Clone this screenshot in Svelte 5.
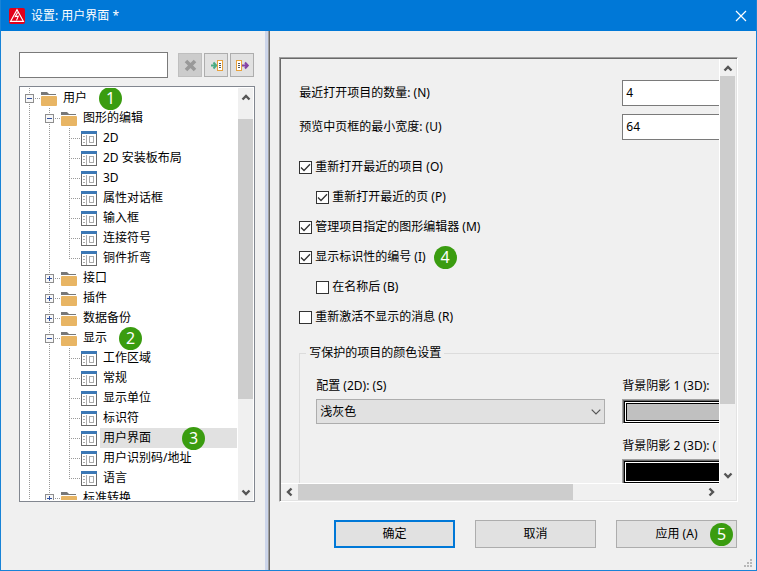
<script>
  const leaf = (label, extra = {}) => ({ level: 2, label, ...extra });

  const rows = [
    { level: 0, label: '用户', open: true, badge: 1 },
    { level: 1, label: '图形的编辑', open: true },
    leaf('2D'),
    leaf('2D 安装板布局'),
    leaf('3D'),
    leaf('属性对话框'),
    leaf('输入框'),
    leaf('连接符号'),
    leaf('铜件折弯', { last: true }),
    { level: 1, label: '接口', open: false },
    { level: 1, label: '插件', open: false },
    { level: 1, label: '数据备份', open: false },
    { level: 1, label: '显示', open: true, badge: 2 },
    leaf('工作区域'),
    leaf('常规'),
    leaf('显示单位'),
    leaf('标识符'),
    leaf('用户界面', { selected: true, badge: 3 }),
    leaf('用户识别码/地址'),
    leaf('语言', { last: true }),
    { level: 1, label: '标准转换', open: false }
  ];

  const options = [
    { label: '重新打开最近的项目 (O)', checked: true },
    { label: '重新打开最近的页 (P)', checked: true, indent: true },
    { label: '管理项目指定的图形编辑器 (M)', checked: true },
    { label: '显示标识性的编号 (I)', checked: true, badge: 4 },
    { label: '在名称后 (B)', checked: false, indent: true },
    { label: '重新激活不显示的消息 (R)', checked: false }
  ];

  const arrows = {
    up: 'M4.5 10.5L8 7L11.5 10.5',
    down: 'M4.5 6.5L8 10L11.5 6.5',
    left: 'M9.5 4.5L6 8L9.5 11.5',
    right: 'M6.5 4.5L10 8L6.5 11.5'
  };
</script>

{#snippet arrow(dir, name)}
  <button class="arrow" aria-label={name}>
    <svg width="16" height="16" viewBox="0 0 16 16"><path d={arrows[dir]} fill="none" stroke="#555" stroke-width="2.4" /></svg>
  </button>
{/snippet}

{#snippet folder()}
  <svg class="icon" width="16" height="16" viewBox="0 0 16 16">
    <path d="M0 2H6L8 4H15V5H0Z" fill="#787878" />
    <path d="M1 6H15Q16 6 16 7V15Q16 16 15 16H1Q0 16 0 15V7Q0 6 1 6Z" fill="#e8b564" />
  </svg>
{/snippet}

{#snippet page()}
  <svg class="icon" width="16" height="16" viewBox="0 0 16 16" shape-rendering="crispEdges">
    <rect x="0.5" y="1.5" width="15" height="14" fill="#fff" stroke="#6a6a6a" />
    <rect x="0" y="1" width="16" height="3" fill="#3c78b5" />
    <path d="M5.5 5V15M2 6.5H4M2 9.5H4M2 12.5H4" stroke="#aaa" fill="none" />
    <rect x="8.5" y="6.5" width="4" height="6" fill="#fff" stroke="#aaa" />
  </svg>
{/snippet}

<div class="window">
  <header>
    <svg width="16" height="16" viewBox="0 0 16 16">
      <rect width="16" height="16" rx="2" fill="#e2001a" />
      <path d="M8 1.8L14.4 13.3H1.6Z" fill="none" stroke="#fff" stroke-width="1.2" />
      <path d="M8.6 4.5L6.3 8.6L9.3 8.1L7.5 12.4" fill="none" stroke="#fff" stroke-width="1.1" />
    </svg>
    <h1>设置: 用户界面 *</h1>
    <button class="close" aria-label="关闭">
      <svg width="12" height="12" viewBox="0 0 12 12"><path d="M1 1L11 11M11 1L1 11" stroke="#fff" stroke-width="1.2" /></svg>
    </button>
  </header>

  <main>
    <aside>
      <div class="tools">
        <input class="search" type="text" aria-label="搜索" />
        <div class="toolbtns">
          <button class="tool" disabled aria-label="清除">
            <svg width="22" height="22" viewBox="0 0 22 22"><path d="M7 7L16 16M16 7L7 16" stroke="#999" stroke-width="3.6" /></svg>
          </button>
          <button class="tool" aria-label="导入">
            <svg width="22" height="22" viewBox="0 0 22 22">
              <path d="M6 11.5H11M8.5 8.5L11.2 11.5L8.5 14.5" fill="none" stroke="#4bab84" stroke-width="2" />
              <rect x="12.5" y="6.5" width="5" height="10" fill="#fff" stroke="#e8a23c" />
              <path d="M14 9.5H16M14 11.5H16M14 13.5H16" stroke="#555" />
            </svg>
          </button>
          <button class="tool" aria-label="导出">
            <svg width="22" height="22" viewBox="0 0 22 22">
              <rect x="5.5" y="6.5" width="5" height="10" fill="#fff" stroke="#e8a23c" />
              <path d="M7 9.5H9M7 11.5H9M7 13.5H9" stroke="#555" />
              <path d="M11 11.5H16.5M14 8.5L16.8 11.5L14 14.5" fill="none" stroke="#8443a5" stroke-width="2" />
            </svg>
          </button>
        </div>
      </div>

      <div class="treebox">
        <ul class="tree" role="tree">
          {#each rows as row}
            <li role="treeitem" aria-selected={!!row.selected}>
              {#each Array(row.level + 1) as _, i}
                <svg class="guide" width="20" height="20" viewBox="0 0 20 20" shape-rendering="crispEdges">
                  <path d={i === 2 && row.last ? 'M9.5 0V11' : 'M9.5 0V20'} stroke="#999" stroke-dasharray="1 1" />
                  {#if i === row.level}
                    <path d="M11 10.5H20" stroke="#999" stroke-dasharray="1 1" />
                    {#if row.level < 2}
                      <rect x="5.5" y="6.5" width="8" height="8" fill="#f7f7f7" stroke="#8e8e8e" />
                      <path d={row.open ? 'M7 10.5H12' : 'M7 10.5H12M9.5 8V13'} stroke="#3050a0" />
                    {/if}
                  {/if}
                </svg>
              {/each}
              {#if row.level < 2}{@render folder()}{:else}{@render page()}{/if}
              <span class="label" class:selected={row.selected}>
                {row.label}
                {#if row.badge}<span class="badge" class:far={row.badge === 3}>{row.badge}</span>{/if}
              </span>
            </li>
          {/each}
        </ul>
        <div class="vbar">
          {@render arrow('up', '向上')}
          <div class="track"><div class="thumb treethumb"></div></div>
          {@render arrow('down', '向下')}
        </div>
      </div>
    </aside>

    <div class="splitter"></div>

    <section>
      <div class="panel">
        <div class="view">
          <form class="content">
            <div class="pair">
              <label for="recent">最近打开项目的数量: (N)</label>
              <input id="recent" type="text" value="4" />
              <label for="preview">预览中页框的最小宽度: (U)</label>
              <input id="preview" type="text" value="64" />
            </div>

            <div class="checks">
              {#each options as o}
                <div class="check" class:indent={o.indent}>
                  <label><input type="checkbox" checked={o.checked} />{o.label}</label>
                  {#if o.badge}<span class="badge near">{o.badge}</span>{/if}
                </div>
              {/each}
            </div>

            <fieldset>
              <legend>写保护的项目的颜色设置</legend>
              <div class="colors">
                <div class="field">
                  <label for="scheme">配置 (2D): (S)</label>
                  <div class="selectwrap">
                    <select id="scheme"><option>浅灰色</option></select>
                    <svg width="10" height="6" viewBox="0 0 10 6"><path d="M0.7 0.7L5 5L9.3 0.7" fill="none" stroke="#555" stroke-width="1.2" /></svg>
                  </div>
                </div>
                <div class="field">
                  <label for="shade1">背景阴影 1 (3D):</label>
                  <button id="shade1" type="button" class="swatch" aria-label="背景阴影 1"><span class="fill gray"></span></button>
                </div>
                <div class="field second">
                  <label for="shade2">背景阴影 2 (3D): (</label>
                  <button id="shade2" type="button" class="swatch" aria-label="背景阴影 2"><span class="fill black"></span></button>
                </div>
              </div>
            </fieldset>
          </form>
        </div>
        <div class="vbar edge">
          {@render arrow('up', '向上')}
          <div class="track"><div class="thumb viewthumb"></div></div>
          {@render arrow('down', '向下')}
        </div>
        <div class="hbar">
          {@render arrow('left', '向左')}
          <div class="track"><div class="thumb widethumb"></div></div>
          {@render arrow('right', '向右')}
        </div>
      </div>

      <footer>
        <button class="push default">确定</button>
        <button class="push">取消</button>
        <button class="push">应用 (A)<span class="badge corner">5</span></button>
      </footer>
    </section>
  </main>

  <svg class="grip" width="8" height="8" viewBox="0 0 8 8" fill="#b8b8b8" shape-rendering="crispEdges">
    <path d="M6 0h2v2h-2zM3 3h2v2h-2zM6 3h2v2h-2zM0 6h2v2h-2zM3 6h2v2h-2zM6 6h2v2h-2z" />
  </svg>
</div>

<style>
  :global(body) {
    margin: 0;
  }

  .window,
  .window * {
    box-sizing: border-box;
  }

  .window {
    position: relative;
    display: flex;
    flex-direction: column;
    height: 100vh;
    border: 1px solid #1883d7;
    border-top: 0;
    background: #f0f0f0;
    color: #000;
    font: 12px/20px 'Noto Sans', 'Noto Sans CJK SC', sans-serif;
  }

  button,
  input,
  select {
    margin: 0;
    padding: 0;
    border-radius: 0;
    color: inherit;
    font: inherit;
  }

  svg {
    display: block;
    flex: none;
  }

  header {
    display: flex;
    align-items: center;
    flex: none;
    height: 31px;
    padding: 0 9px 0 8px;
    background: #0078d7;
    color: #fff;
  }

  h1 {
    flex: 1;
    margin: 0 0 0 6px;
    font-size: 12px;
    font-weight: 400;
  }

  .close {
    border: 0;
    background: none;
  }

  main {
    display: flex;
    flex: 1;
    min-height: 0;
  }

  aside {
    display: flex;
    flex-direction: column;
    flex: 0 0 35%;
    min-width: 0;
    padding: 21px 10px 68px 18px;
  }

  .tools {
    display: flex;
    align-items: center;
    gap: 10px;
    margin-bottom: 8px;
    padding-right: 1px;
  }

  .search {
    flex: 1;
    min-width: 0;
    height: 26px;
    border: 1px solid #7a7a7a;
    background: #fff;
  }

  .toolbtns {
    display: flex;
    gap: 2px;
  }

  .tool {
    width: 24px;
    height: 24px;
    border: 1px solid #adadad;
    background: #e1e1e1;
  }

  .tool:disabled {
    border-color: #bfbfbf;
    background: #ccc;
  }

  .treebox {
    display: flex;
    flex: 1;
    min-height: 0;
    padding: 1px;
    padding-left: 0;
    border: 1px solid #828790;
    background: #fff;
  }

  .tree {
    flex: 1;
    min-width: 0;
    margin: 0;
    padding: 0 1px 0 0;
    overflow: hidden;
    list-style: none;
  }

  li {
    display: flex;
    align-items: center;
    height: 20px;
  }

  .icon {
    margin: 0 3px 0 1px;
  }

  .label {
    display: flex;
    align-items: center;
    flex: 1;
    height: 20px;
    padding-left: 3px;
    white-space: nowrap;
  }

  .selected {
    background: #e1e1e1;
  }

  .badge {
    flex: none;
    width: 23px;
    height: 23px;
    margin-left: 12px;
    border-radius: 50%;
    background: #3a9c10;
    color: #fff;
    font-size: 16px;
    line-height: 23px;
    text-align: center;
  }

  .badge.far {
    margin-left: 31px;
  }

  .badge.near {
    margin-left: 8px;
  }

  .badge.corner {
    position: absolute;
    top: 2px;
    right: 3px;
  }

  .vbar,
  .hbar {
    display: flex;
    flex: none;
    background: #f0f0f0;
  }

  .vbar {
    flex-direction: column;
    width: 15px;
  }

  .arrow {
    display: flex;
    align-items: center;
    justify-content: center;
    flex: none;
    width: 15px;
    height: 17px;
    border: 0;
    background: none;
  }

  .track {
    flex: 1;
    min-width: 0;
    min-height: 0;
  }

  .thumb {
    height: 100%;
    background: #cdcdcd;
  }

  .treethumb {
    height: 74%;
    margin-top: 14px;
  }

  .viewthumb {
    height: 84%;
  }

  .widethumb {
    width: 68%;
  }

  .splitter {
    flex: none;
    width: 5px;
    border-right: 1px solid #696969;
    background: linear-gradient(to right, #ccd5ea 3px, #a0a0a0 3px);
  }

  section {
    display: flex;
    flex-direction: column;
    flex: 1;
    min-width: 0;
    padding: 26px 18px 22px 9px;
  }

  .panel {
    display: grid;
    grid-template-columns: minmax(0, 1fr) 17px;
    grid-template-rows: minmax(0, 1fr) 17px;
    flex: 1;
    min-height: 0;
    border: 1px solid;
    border-color: #a0a0a0 #fff #fff #a0a0a0;
    box-shadow: inset 1px 1px #696969, inset -1px -1px #e3e3e3;
    padding: 1px;
  }

  .view {
    overflow: hidden;
  }

  .edge {
    width: 17px;
    padding-right: 1px;
    border-left: 1px solid #fff;
  }

  .hbar {
    border-top: 1px solid #fff;
  }

  .hbar .arrow {
    width: 17px;
    height: 16px;
  }

  .content {
    width: 149%;
    padding: 21px 5px 0 18px;
  }

  .pair {
    display: grid;
    grid-template-columns: 1fr 1fr;
    align-items: center;
    gap: 8px 17px;
    margin-bottom: 12px;
  }

  .pair input {
    width: 100%;
    height: 26px;
    padding: 0 3px 2px;
    border: 1px solid #7a7a7a;
    background: #fff;
  }

  .check {
    display: flex;
    align-items: center;
    height: 30px;
  }

  .check.indent {
    padding-left: 17px;
  }

  .check label {
    display: flex;
    align-items: center;
    gap: 3px;
  }

  .check input {
    appearance: none;
    width: 13px;
    height: 13px;
    border: 1px solid #333;
    background: #fff;
  }

  .check input:checked {
    background: #fff url("data:image/svg+xml,%3Csvg xmlns='http://www.w3.org/2000/svg' viewBox='0 0 11 11'%3E%3Cpath d='M1 5.5L4 8.5L10 2.2' fill='none' stroke='%23333' stroke-width='1.3'/%3E%3C/svg%3E") center / 11px 11px no-repeat;
  }

  fieldset {
    min-width: 0;
    height: 200px;
    margin: 11px 0 0;
    padding: 13px 16px 0;
    border: 1px solid #dcdcdc;
  }

  legend {
    margin-left: -10px;
    padding: 0 3px;
  }

  .colors {
    display: grid;
    grid-template-columns: 1fr 1fr;
    gap: 12px 17px;
  }

  .field {
    display: flex;
    flex-direction: column;
    gap: 3px;
    min-width: 0;
  }

  .field.second {
    grid-column: 2;
  }

  .field label {
    white-space: nowrap;
  }

  .selectwrap {
    position: relative;
  }

  .selectwrap svg {
    position: absolute;
    top: 10px;
    right: 4px;
    pointer-events: none;
  }

  select {
    appearance: none;
    display: block;
    width: 100%;
    height: 25px;
    padding: 0 20px 0 3px;
    border: 1px solid #adadad;
    background: #e1e1e1;
  }

  .swatch {
    height: 25px;
    padding: 1px 0 0 1px;
    border: 1px solid;
    border-color: #a0a0a0 #fff #fff #a0a0a0;
    box-shadow: inset 1px 1px #696969;
    background: #fff;
  }

  .fill {
    display: block;
    height: 100%;
    border: 1px solid #000;
    box-shadow: inset 0 0 0 1px #fff, inset 0 0 0 2px #000;
  }

  .gray {
    background: #c0c0c0;
  }

  .black {
    background: #000;
  }

  footer {
    display: flex;
    justify-content: flex-end;
    gap: 20px;
    margin-top: 18px;
    padding-right: 1px;
  }

  .push {
    position: relative;
    width: 121px;
    height: 28px;
    border: 1px solid #adadad;
    background: #e1e1e1;
  }

  .push.default {
    border: 2px solid #0078d7;
  }

  .grip {
    position: absolute;
    right: 4px;
    bottom: 3px;
  }
</style>
